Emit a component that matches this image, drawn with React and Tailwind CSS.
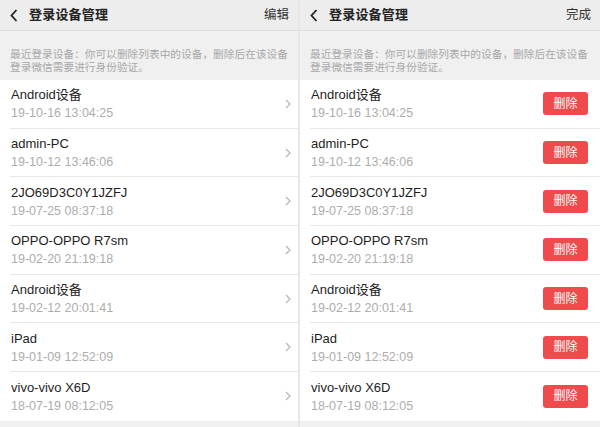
import React from 'react';

const devices = [
    { name: 'Android设备', time: '19-10-16 13:04:25' },
    { name: 'admin-PC', time: '19-10-12 13:46:06' },
    { name: '2JO69D3C0Y1JZFJ', time: '19-07-25 08:37:18' },
    { name: 'OPPO-OPPO R7sm', time: '19-02-20 21:19:18' },
    { name: 'Android设备', time: '19-02-12 20:01:41' },
    { name: 'iPad', time: '19-01-09 12:52:09' },
    { name: 'vivo-vivo X6D', time: '18-07-19 08:12:05' },
];

const font = { fontFamily: '"Liberation Sans", "Noto Sans CJK SC", sans-serif' };

function Panel({ editing, width }) {
    return (
        <div className={`${width} h-[427px] flex flex-col bg-[#f0f0f0]`}>
            <div className="h-[31px] shrink-0 flex items-center bg-[#ededed] border-b border-[#dedede] pl-[10px] pr-[9px]">
                <svg width="8" height="13" viewBox="0 0 8 13" className="shrink-0">
                    <polyline points="6.5,1 1.5,6.5 6.5,12" fill="none" stroke="#222" strokeWidth="1.8" />
                </svg>
                <span className="ml-[11px] text-[13px] font-bold text-[#222] tracking-[0.2px]">登录设备管理</span>
                <span className="ml-auto text-[12.5px] text-[#333]">{editing ? '完成' : '编辑'}</span>
            </div>
            <div className="h-[49px] shrink-0 pt-[17px] pl-[10px] text-[10.7px] leading-[13px] text-[#a8a8a8] whitespace-nowrap">
                最近登录设备：你可以删除列表中的设备，删除后在该设备
                <br />
                登录微信需要进行身份验证。
            </div>
            <div className="bg-white">
                {devices.map((d, i) => (
                    <div key={i} className="pl-[10px]">
                        <div className={`h-[48.7px] flex items-center pr-[12px] ${i < devices.length - 1 ? 'border-b border-[#e8e8e8]' : ''}`}>
                            <div className="flex flex-col pl-[1px] pt-[1px]">
                                <span className="text-[13px] leading-[18px] text-[#1e1e1e]">{d.name}</span>
                                <span className="text-[12.5px] leading-[18px] text-[#adadad]">{d.time}</span>
                            </div>
                            {editing ? (
                                <div className="ml-auto w-[45px] h-[23px] rounded-[3px] bg-[#ef4a4c] flex items-center justify-center text-[12px] text-white">
                                    删除
                                </div>
                            ) : (
                                <svg width="6" height="10" viewBox="0 0 6 10" className="ml-auto mr-[-5px]">
                                    <polyline points="1,1 5,5 1,9" fill="none" stroke="#b5b5b5" strokeWidth="1.2" />
                                </svg>
                            )}
                        </div>
                    </div>
                ))}
            </div>
        </div>
    );
}

export default function App() {
    return (
        <div className="w-[600px] h-[427px] flex gap-[2px] bg-[#e6e6e6] overflow-hidden" style={font}>
            <Panel editing={false} width="w-[298px]" />
            <Panel editing={true} width="w-[300px]" />
        </div>
    );
}
